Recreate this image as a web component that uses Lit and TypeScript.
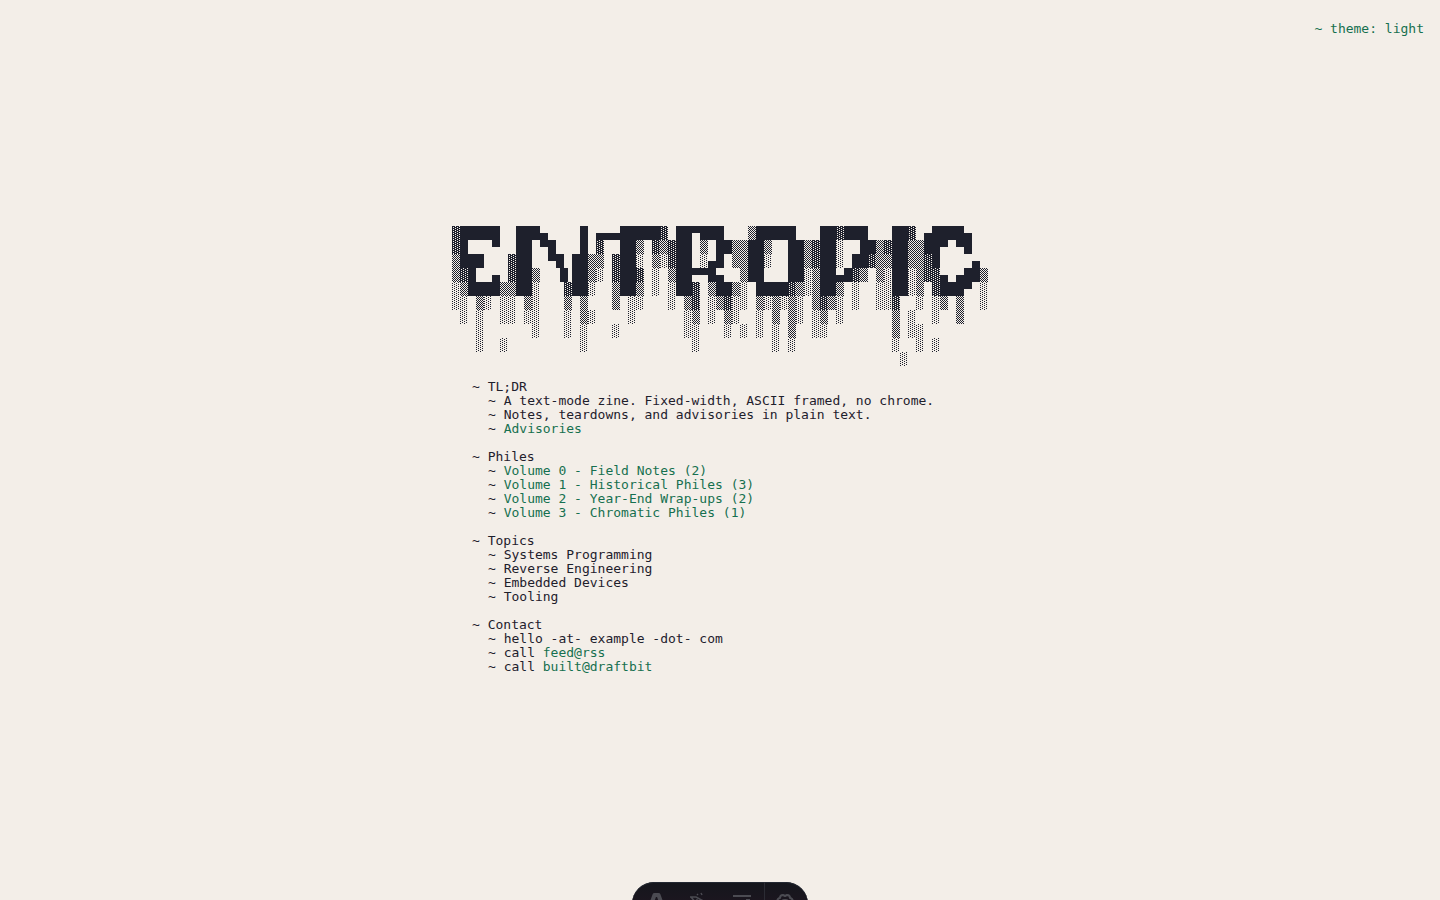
import { LitElement, html, css, svg } from "lit";
import { customElement, state } from "lit/decorators.js";

const BANNER = [
  "▓█████  ███▄    █ ▄▄▄█████▓ ██▀███   ▒█████   ██▓███   ██▓ ▄████▄  ",
  "▓█   ▀  ██ ▀█   █ ▓  ██▒ ▓▒▓██ ▒ ██▒▒██▒  ██▒▓██░  ██▒▓██▒▒██▀ ▀█  ",
  "▒███   ▓██  ▀█ ██▒▒ ▓██░ ▒░▓██ ░▄█ ▒▒██░  ██▒▓██░ ██▓▒▒██▒▒▓█    ▄ ",
  "▒▓█  ▄ ▓██▒  ▐▌██▒░ ▓██▓ ░ ▒██▀▀█▄  ▒██   ██░▒██▄█▓▒ ▒░██░▒▓▓▄ ▄██▒",
  "░▒████▒▒██░   ▓██░  ▒██▒ ░ ░██▓ ▒██▒░ ████▓▒░▒██▒ ░  ░░██░▒ ▓███▀ ░",
  "░░ ▒░ ░░ ▒░   ▒ ▒   ▒ ░░   ░ ▒▓ ░▒▓░░ ▒░▒░▒░ ▒▓▒░ ░  ░░▓  ░ ░▒ ▒  ░",
  " ░ ░  ░░ ░░   ░ ▒░    ░      ░▒ ░ ▒░  ░ ▒ ▒░ ░▒ ░      ▒ ░  ░  ▒   ",
  "   ░      ░   ░ ░   ░        ░░   ░ ░ ░ ░ ▒  ░░        ▒ ░░        ",
  "   ░  ░         ░             ░         ░ ░            ░  ░ ░      ",
  "                                                        ░          ",
];
const CW = 8;
const CH = 14;

interface Item { text?: string; link?: string; }
interface Section { title: string; items: Item[]; }

const SECTIONS: Section[] = [
  { title: "TL;DR", items: [
    { text: "A text-mode zine. Fixed-width, ASCII framed, no chrome." },
    { text: "Notes, teardowns, and advisories in plain text." },
    { link: "Advisories" },
  ] },
  { title: "Philes", items: [
    { link: "Volume 0 - Field Notes (2)" },
    { link: "Volume 1 - Historical Philes (3)" },
    { link: "Volume 2 - Year-End Wrap-ups (2)" },
    { link: "Volume 3 - Chromatic Philes (1)" },
  ] },
  { title: "Topics", items: [
    { text: "Systems Programming" },
    { text: "Reverse Engineering" },
    { text: "Embedded Devices" },
    { text: "Tooling" },
  ] },
  { title: "Contact", items: [
    { text: "hello -at- example -dot- com" },
    { text: "call ", link: "feed@rss" },
    { text: "call ", link: "built@draftbit" },
  ] },
];

@customElement("zine-banner")
export class ZineBanner extends LitElement {
  static styles = css`
    :host { display: block; }
    svg { display: block; shape-rendering: crispEdges; fill: currentColor; }
  `;

  private cell(ch: string, x: number, y: number) {
    switch (ch) {
      case "█": return svg`<rect x=${x} y=${y} width="8" height="14"/>`;
      case "▀": return svg`<rect x=${x} y=${y} width="8" height="7"/>`;
      case "▄": return svg`<rect x=${x} y=${y + 7} width="8" height="7"/>`;
      case "▌": return svg`<rect x=${x} y=${y} width="4" height="14"/>`;
      case "▐": return svg`<rect x=${x + 4} y=${y} width="4" height="14"/>`;
      case "░": return svg`<rect x=${x} y=${y} width="8" height="14" fill="url(#light)"/>`;
      case "▒": return svg`<rect x=${x} y=${y} width="8" height="14" fill="url(#medium)"/>`;
      case "▓": return svg`<rect x=${x} y=${y} width="8" height="14" fill="url(#dark)"/>`;
      default: return null;
    }
  }

  render() {
    const w = BANNER[0].length * CW;
    const h = BANNER.length * CH;
    return html`<svg role="img" aria-label="ENTROPIC" width=${w} height=${h} viewBox="0 0 ${w} ${h}">
      <defs>
        <pattern id="light" width="4" height="2" patternUnits="userSpaceOnUse">
          <path d="M2 0h1v1h-1zM0 1h1v1h-1z"/>
        </pattern>
        <pattern id="medium" width="2" height="2" patternUnits="userSpaceOnUse">
          <path d="M0 0h1v1h-1zM1 1h1v1h-1z"/>
        </pattern>
        <pattern id="dark" width="4" height="2" patternUnits="userSpaceOnUse">
          <path d="M0 0h3v1h-3zM0 1h1v1h-1zM2 1h2v1h-2z"/>
        </pattern>
      </defs>
      ${BANNER.map((row, r) => [...row].map((ch, c) => this.cell(ch, c * CW, r * CH)))}
    </svg>`;
  }
}

@customElement("tool-dock")
export class ToolDock extends LitElement {
  static styles = css`
    :host {
      display: flex;
      height: 44px;
      padding: 0 3px;
      box-sizing: border-box;
      border-radius: 22px;
      background: linear-gradient(#14161c, #1b161f 18px);
      box-shadow: inset 0 1px #232832;
    }
    button {
      display: flex;
      justify-content: center;
      width: 43px;
      padding: 0;
      border: 0;
      background: none;
      color: #4b4b52;
    }
    .last { width: 41px; border-left: 1px solid #2b2c34; }
    svg { fill: none; stroke: currentColor; stroke-width: 2; }
  `;

  render() {
    return html`
      <button aria-label="Inspect"><svg width="24" height="36" viewBox="0 0 24 36">
        <path d="M7 20L9.500 13H13.500L16 20" stroke-width="4" stroke-linejoin="round"/>
      </svg></button>
      <button aria-label="Annotate"><svg width="24" height="36" viewBox="0 0 24 36">
        <path d="M2 15h6l11 6M3 15l5 6M9 12l1 1M13 11l1 2M9 15v6" stroke-width="1.500"/>
      </svg></button>
      <button aria-label="Menu"><svg width="24" height="36" viewBox="0 0 24 36">
        <path d="M2 14h18M15 18h4"/>
      </svg></button>
      <button class="last" aria-label="Settings"><svg width="24" height="36" viewBox="0 0 24 36">
        <path d="M4 22v-3l1-2q1-1 2-1q0-3 3-3l2 1l2-1q3 0 3 3q1 0 2 1l1 2v3M8 22q0-4 4-4t4 4" stroke-linejoin="round"/>
      </svg></button>
    `;
  }
}

@customElement("app-root")
export class AppRoot extends LitElement {
  static styles = css`
    :host {
      --ink: #1e202c;
      --link: #16704f;
      display: flex;
      flex-direction: column;
      justify-content: center;
      align-items: center;
      box-sizing: border-box;
      min-height: 100vh;
      background: #f3eee8;
      color: var(--ink);
      font: 13px/14px "DejaVu Sans Mono", "Liberation Mono", monospace;
    }
    .theme {
      position: absolute;
      top: 22px;
      right: 16px;
      padding: 0;
      border: 0;
      background: none;
      color: var(--link);
      font: inherit;
      cursor: pointer;
    }
    .dock { position: fixed; bottom: -26px; left: 50%; transform: translateX(-50%); }
    .page { display: flex; flex-direction: column; }
    .notes { display: flex; flex-direction: column; gap: 14px; margin: 14px 0 0 20px; }
    h2 { margin: 0; font: inherit; white-space: pre; }
    ul { margin: 0; padding: 0 0 0 16px; list-style: none; }
    li { white-space: pre; }
    a { color: var(--link); text-decoration: none; }
  `;

  @state() private theme = "light";

  render() {
    return html`
      <button class="theme">~ theme: ${this.theme}</button>
      <main class="page">
        <zine-banner></zine-banner>
        <div class="notes">
          ${SECTIONS.map((s) => html`<section>
            <h2>~ ${s.title}</h2>
            <ul>${s.items.map((i) => html`<li>~ ${i.text ?? ""}${i.link ? html`<a href="#">${i.link}</a>` : ""}</li>`)}</ul>
          </section>`)}
        </div>
      </main>
      <tool-dock class="dock"></tool-dock>
    `;
  }
}
